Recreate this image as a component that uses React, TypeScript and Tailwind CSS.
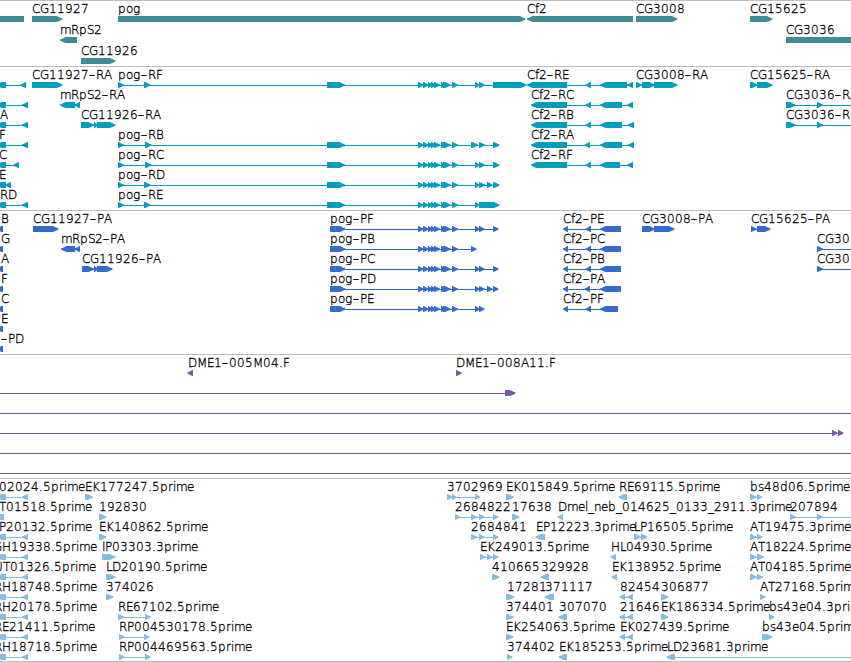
type Feature = {
  dir: 'L' | 'R';
  exons: number[][];
  from?: number;
  to?: number;
};
type Label = [number, string];
type Row = { labels?: Label[]; features?: Feature[] };

const WIDTH = 851;
const BASELINE = 12;

// Horizontal advance of each character, in whole pixels.
const ADVANCE: Record<string, number> = {
  A: 8, B: 7, C: 8, D: 9, E: 7, F: 6, G: 9, H: 9, I: 3, J: 4, K: 8, L: 6, M: 10,
  P: 7, R: 8, S: 7, T: 7, U: 9, b: 8, d: 8, e: 7, f: 4, g: 8, i: 3, l: 3, m: 11,
  n: 7, o: 7, p: 8, r: 5, s: 6, '.': 4, '-': 7, _: 6,
};

const R = (exons: number[][], to?: number, from?: number): Feature => ({ dir: 'R', exons, to, from });
const L = (exons: number[][], to?: number, from?: number): Feature => ({ dir: 'L', exons, to, from });

const POG_MID = [[418, 423.5], [423, 428.5], [428, 432.5], [431, 436], [434, 440], [441, 446.5], [443, 450.5], [452, 458]];
const pogR = (second: number, tail: number[][]) =>
  R([[118, 124], [second, second + 6.5], [327, 345], ...POG_MID, ...tail]);
const pogP = (tail: number[][]) => R([[330, 345.5], ...POG_MID, ...tail]);
const cf2R = (start: number, mid: number, end: number, last: number) =>
  L([[start, 567], [mid, mid + 5.5], [600, end], [last, last + 6]]);
const cf2P = (mid: number, end: number) => L([[563, 568], [mid, mid + 5.5], [600, end]]);
const edgeR = (s = 22, e = 28) => L([[-4, 6], [s, e]]);
const edgeP = () => L([[-4, 3]]);

const genes: Row[] = [
  {
    labels: [[32, 'CG11927'], [118, 'pog'], [527, 'Cf2'], [636, 'CG3008'], [750, 'CG15625']],
    features: [L([[-8, 24]]), R([[32, 62.5]]), R([[118, 525.5]]), L([[527, 633]]), R([[636, 677.5]]), R([[750, 772.5]])],
  },
  { labels: [[60, 'mRpS2'], [786, 'CG3036']], features: [L([[60, 77]]), R([[786, 870]])] },
  { labels: [[81, 'CG11926']], features: [R([[81, 115.5]])] },
];

const transcripts: Row[] = [
  {
    labels: [[32, 'CG11927-RA'], [118, 'pog-RF'], [527, 'Cf2-RE'], [636, 'CG3008-RA'], [750, 'CG15625-RA']],
    features: [
      edgeR(20.5, 26), R([[32, 62.5]]),
      pogR(144, [[475, 479.5], [479, 485], [493, 526.5]]),
      cf2R(527, 585.5, 627, 627),
      R([[636, 642], [642, 655], [654, 677.5]]),
      R([[750, 757.5], [757, 772.5]]),
    ],
  },
  {
    labels: [[60, 'mRpS2-RA'], [531, 'Cf2-RC'], [786, 'CG3036-RA']],
    features: [edgeR(), L([[60, 75], [74.5, 80]]), cf2R(531, 585.5, 622, 627), R([[786, 795.5], [817, 823]], WIDTH)],
  },
  {
    labels: [[0, 'A'], [81, 'CG11926-RA'], [531, 'Cf2-RB'], [786, 'CG3036-RB']],
    features: [edgeR(), R([[81, 94], [94, 98], [97, 115.5]]), cf2R(531, 585.5, 622, 628), R([[786, 795.5], [817, 823]], WIDTH)],
  },
  {
    labels: [[-1, 'F'], [118, 'pog-RB'], [531, 'Cf2-RA']],
    features: [edgeR(), pogR(145, [[471, 478], [479, 485], [493, 499.5]]), cf2R(531, 584.5, 622, 628)],
  },
  {
    labels: [[-1, 'C'], [118, 'pog-RC'], [531, 'Cf2-RF']],
    features: [edgeR(13.5, 19), pogR(145, [[475, 479.5], [479, 485], [493, 499.5]]), cf2R(531, 585.5, 620, 627)],
  },
  {
    labels: [[-1, 'E'], [118, 'pog-RD']],
    features: [edgeR(5.5, 11), pogR(144, [[475, 479.5], [479, 485], [487, 492.5], [493, 499.5]])],
  },
  {
    labels: [[0, 'RD'], [118, 'pog-RE']],
    features: [edgeR(), pogR(144, [[475, 479.5], [479, 499.5]])],
  },
];

const proteins: Row[] = [
  {
    labels: [[1, 'B'], [33, 'CG11927-PA'], [330, 'pog-PF'], [563, 'Cf2-PE'], [642, 'CG3008-PA'], [751, 'CG15625-PA']],
    features: [
      edgeP(), R([[33, 58.5]]), pogP([[475, 479.5], [479, 484.5], [493, 498.5]]), cf2P(585.5, 621),
      R([[642, 655], [654, 674.5]]), R([[751, 756.5], [757, 770.5]]),
    ],
  },
  {
    labels: [[1, 'G'], [61, 'mRpS2-PA'], [330, 'pog-PB'], [563, 'Cf2-PC'], [817, 'CG30']],
    features: [edgeP(), L([[61, 75], [74.5, 80]]), pogP([[471, 476.5]]), cf2P(585.5, 621), R([[817, 823]], WIDTH)],
  },
  {
    labels: [[1, 'A'], [82, 'CG11926-PA'], [330, 'pog-PC'], [563, 'Cf2-PB'], [817, 'CG30']],
    features: [
      edgeP(), R([[82, 94], [94, 98], [97, 112.5]]), pogP([[475, 479.5], [479, 484.5], [493, 498.5]]),
      cf2P(585.5, 621), R([[817, 823]], WIDTH),
    ],
  },
  {
    labels: [[1, 'F'], [330, 'pog-PD'], [563, 'Cf2-PA']],
    features: [edgeP(), pogP([[475, 479.5], [479, 484.5], [487, 492.5], [493, 498.5]]), cf2P(584.5, 621)],
  },
  {
    labels: [[1, 'C'], [330, 'pog-PE'], [563, 'Cf2-PF']],
    features: [edgeP(), pogP([[475, 479.5], [479, 484.5]]), cf2P(585.5, 618)],
  },
  { labels: [[1, 'E']], features: [edgeP()] },
  { labels: [[1, '-PD']], features: [edgeP()] },
];

const bacs: Row[] = [
  { labels: [[188, 'DME1-005M04.F'], [456, 'DME1-008A11.F']], features: [L([[187.5, 193]]), R([[456, 461.5]])] },
  { features: [R([[505, 515.5]], undefined, 0)] },
  { features: [R([], WIDTH, 0)] },
  { features: [R([[832, 837.5], [838, 843.5]], undefined, 0)] },
  { features: [R([], WIDTH, 0)] },
  { features: [R([], WIDTH, 0)] },
];

const ests: Row[] = [
  {
    labels: [[-1, '02024.5prime'], [85, 'EK177247.5prime'], [447, '3702969'], [506, 'EK015849.5prime'], [619, 'RE69115.5prime'], [750, 'bs48d06.5prime']],
    features: [
      edgeR(), R([[85, 93]]), R([[447, 452], [452, 456.5], [475, 480]]), R([[506, 514]]), L([[618.5, 627]]),
      R([[750, 756.5], [757, 762]]),
    ],
  },
  {
    labels: [[-1, 'T01518.5prime'], [99, '192830'], [455, '2684822'], [512, '17638'], [558, 'Dmel_neb_014625_0133_2911.3prime'], [790, '207894']],
    features: [
      L([[-5, 4]]), R([[99, 106.5]]), R([[455, 460], [471, 477], [479, 484.5], [493, 498.5]]), R([[512, 519.5]]),
      L([[557.5, 563]]), R([[790, 796], [817, 823]], WIDTH),
    ],
  },
  {
    labels: [[-1, 'P20132.5prime'], [99, 'EK140862.5prime'], [471, '2684841'], [536, 'EP12223.3prime'], [634, 'LP16505.5prime'], [750, 'AT19475.3prime']],
    features: [
      edgeR(), R([[99, 106.5]]), R([[471, 477], [479, 484.5], [493, 498.5]]), L([[535.5, 545]]),
      R([[634, 641], [641, 647.5]]), R([[750, 756.5], [757, 762.5]]),
    ],
  },
  {
    labels: [[-7, 'GH19338.5prime'], [102, 'IP03303.3prime'], [480, 'EK249013.5prime'], [611, 'HL04930.5prime'], [750, 'AT18224.5prime']],
    features: [
      edgeR(), R([[102, 115.5]]), R([[480, 485.5], [487, 492.5], [493, 498.5]]), L([[610.5, 616]]),
      R([[750, 756.5], [757, 764]]),
    ],
  },
  {
    labels: [[-6, 'UT01326.5prime'], [106, 'LD20190.5prime'], [492, '410665'], [541, '329928'], [612, 'EK138952.5prime'], [750, 'AT04185.5prime']],
    features: [
      edgeR(), R([[106, 115.5]]), R([[492, 499.5]]), L([[540.5, 549]]), L([[611.5, 617]]),
      R([[750, 757], [757, 763]]),
    ],
  },
  {
    labels: [[-6, 'RH18748.5prime'], [106, '374026'], [507, '17281'], [545, '371117'], [620, '82454'], [661, '306877'], [760, 'AT27168.5prime']],
    features: [
      edgeR(), R([[106, 113.5]]), R([[506, 514.5]]), L([[544.5, 554]]), L([[619.5, 625], [627, 633]]),
      R([[661, 668.5]]), R([[760, 765.5]]),
    ],
  },
  {
    labels: [[-6, 'RH20178.5prime'], [118, 'RE67102.5prime'], [506, '374401'], [559, '307070'], [620, '21646'], [661, 'EK186334.5prime'], [769, 'bs43e04.3prime']],
    features: [
      edgeR(), R([[118, 124], [145, 150.5]]), R([[506, 513.5]]), L([[558.5, 567]]), L([[619.5, 625], [627, 633]]),
      R([[661, 668.5]]), R([[769, 774.5]]),
    ],
  },
  {
    labels: [[-6, 'RE21411.5prime'], [119, 'RP004530178.5prime'], [506, 'EK254063.5prime'], [620, 'EK027439.5prime'], [762, 'bs43e04.5prime']],
    features: [
      edgeR(), R([[119, 124.5], [144, 149.5]]), R([[506, 513.5]]), L([[619.5, 625], [627, 633]]), R([[762, 772.5]]),
    ],
  },
  {
    labels: [[-6, 'RH18718.5prime'], [119, 'RP004469563.5prime'], [507, '374402'], [559, 'EK185253.5prime'], [667, 'LD23681.3prime']],
    features: [
      edgeR(), R([[119, 124.5], [145, 150.5]]), R([[507, 512.5]]), L([[558.5, 567]]), L([[666.5, 675]], WIDTH),
    ],
  },
];

// Bar with a slightly rounded arrow head that points along the strand.
function arrow(dir: 'L' | 'R', a: number, b: number) {
  const top = BASELINE + 3;
  const bottom = top + 6;
  const head = Math.min(5.5, b - a - 0.6);
  const tip = dir === 'R' ? b : a;
  const tail = dir === 'R' ? a : b;
  const s = dir === 'R' ? -1 : 1;
  const neck = tip + s * head;
  const bulge = tip + s * head * 0.45;
  return [
    [tail, top], [neck, top], [bulge, top + 1.4], [tip, top + 2.6],
    [tip, top + 3.6], [bulge, top + 4.7], [neck, bottom], [tail, bottom],
  ].map((p) => p.join(',')).join(' ');
}

function FeatureGlyph({ dir, exons, from, to }: Feature) {
  const start = from ?? exons[0][0];
  const end = to ?? exons[exons.length - 1][1];
  const hasLine = exons.length !== 1 || from !== undefined || to !== undefined;
  const lineStart = dir === 'L' ? start + 3 : start;
  const lineEnd = to === undefined && dir === 'R' ? end - 2 : end;
  return (
    <g>
      {hasLine && <rect x={lineStart} y={BASELINE + 6} width={lineEnd - lineStart} height={1} shapeRendering="crispEdges" />}
      {exons.map(([a, b], i) => (
        <polygon key={i} points={arrow(dir, a, b)} />
      ))}
    </g>
  );
}

function FeatureLabel({ x, text }: { x: number; text: string }) {
  const xs: number[] = [];
  const ys: number[] = [];
  let pen = x;
  for (const ch of text) {
    xs.push(ch === '-' ? pen - 0.5 : pen);
    ys.push(ch === '-' ? BASELINE + 2 : BASELINE);
    pen += ADVANCE[ch] ?? 8;
  }
  return (
    <text x={xs.join(' ')} y={ys.join(' ')} className="fill-black stroke-black stroke-[0.3px] text-[12px] font-extralight">
      {text.split(/(-)/).map((part, i) =>
        part === '-' ? (
          <tspan key={i} className="text-[19px]">-</tspan>
        ) : (
          part
        ),
      )}
    </text>
  );
}

function Track({ rows, rowClass, className }: { rows: Row[]; rowClass: string; className: string }) {
  return (
    <section className={`flex w-full shrink-0 flex-col border-t border-[#bebebe] ${className}`}>
      {rows.map((row, i) => (
        <svg key={i} className={`block w-[851px] shrink-0 overflow-visible fill-current ${rowClass}`}>
          {row.features?.map((f, j) => <FeatureGlyph key={j} {...f} />)}
          {row.labels?.map(([x, text], j) => <FeatureLabel key={j} x={x} text={text} />)}
        </svg>
      ))}
    </section>
  );
}

export default function App() {
  return (
    <main className="flex h-[662px] w-[851px] flex-col overflow-hidden bg-white font-['DejaVu_Sans',sans-serif]">
      <Track rows={genes} rowClass="h-[21px]" className="h-[66px] text-[#408c93]" />
      <Track rows={transcripts} rowClass="h-5" className="h-36 text-[#009dbf]" />
      <Track rows={proteins} rowClass="h-5" className="h-36 text-[#336ccc]" />
      <Track rows={bacs} rowClass="h-5" className="h-[124px] text-[#7859a8]" />
      <Track rows={ests} rowClass="h-5" className="h-[184px] border-b text-[#86bcde]" />
    </main>
  );
}
